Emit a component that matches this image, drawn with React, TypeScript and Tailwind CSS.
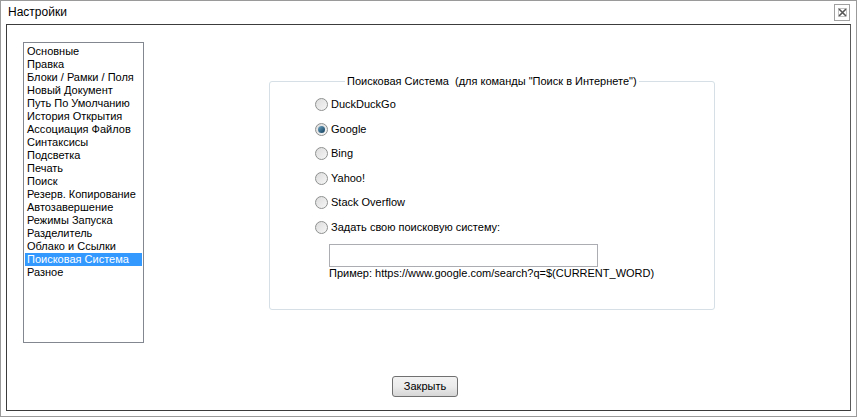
const sections = [
  "Основные",
  "Правка",
  "Блоки / Рамки / Поля",
  "Новый Документ",
  "Путь По Умолчанию",
  "История Открытия",
  "Ассоциация Файлов",
  "Синтаксисы",
  "Подсветка",
  "Печать",
  "Поиск",
  "Резерв. Копирование",
  "Автозавершение",
  "Режимы Запуска",
  "Разделитель",
  "Облако и Ссылки",
  "Поисковая Система",
  "Разное",
];

const engines = [
  "DuckDuckGo",
  "Google",
  "Bing",
  "Yahoo!",
  "Stack Overflow",
  "Задать свою поисковую систему:",
];

const Radio = ({ checked }: { checked: boolean }) => (
  <span className="flex h-[13px] w-[13px] items-center justify-center rounded-full border border-[#8e8f8f] bg-gradient-to-br from-[#dcdcdc] to-[#f6f6f6]">
    {checked && (
      <span className="h-[7px] w-[7px] rounded-full bg-gradient-to-br from-[#6fa6c4] to-[#0f3e5c]" />
    )}
  </span>
);

const App = () => {
  const selected = "Поисковая Система";

  return (
    <div className="flex h-[417px] w-[857px] flex-col border border-[#9a9a9a] bg-white font-['Liberation_Sans','Arial',sans-serif] text-[11px] leading-[13px] text-black">
      <div className="flex h-[23px] items-center justify-between pl-[7px] pr-[6px]">
        <span className="text-[12px]">Настройки</span>
        <span className="flex h-[17px] w-[16px] items-center justify-center border border-[#a0a0a0] bg-white">
          <svg width="9" height="9" viewBox="0 0 9 9">
            <path d="M1 1 L8 8 M8 1 L1 8" stroke="#555" strokeWidth="1.6" />
            <rect x="0.5" y="0.5" width="8" height="8" fill="none" stroke="#999" strokeWidth="0.6" />
          </svg>
        </span>
      </div>

      <div className="mx-[5px] mb-[5px] flex flex-1 flex-col border border-[#3c3c3c] border-r-[#5a5a5a]">
        <div className="flex">
          <div className="ml-[16px] mt-[17px] h-[301px] w-[121px] whitespace-nowrap border border-[#828790] px-[1px] pt-[2px]">
            {sections.map((s) => (
              <div
                key={s}
                className={
                  s === selected
                    ? "h-[13px] bg-[#3399ff] pl-[2px] text-white"
                    : "h-[13px] pl-[2px]"
                }
              >
                {s}
              </div>
            ))}
          </div>

          <fieldset className="ml-[125px] mt-[50px] h-[235px] w-[446px] rounded-[3px] border border-[#d5dfe5] pl-[45px]">
            <legend className="ml-[30px] whitespace-pre px-[2px]">
              Поисковая Система  (для команды "Поиск в Интернете")
            </legend>
            <div className="mt-[10px] flex flex-col gap-[11.5px]">
              {engines.map((e) => (
                <label key={e} className="flex h-[13px] items-center gap-[3px] whitespace-nowrap">
                  <Radio checked={e === "Google"} />
                  <span>{e}</span>
                </label>
              ))}
            </div>
            <div className="ml-[14px] mt-[10px] h-[23px] w-[269px] border border-[#abadb3] bg-white" />
            <div className="ml-[14px] whitespace-nowrap">
              Пример: https://www.google.com/search?q=$(CURRENT_WORD)
            </div>
          </fieldset>
        </div>

        <button className="ml-[385px] mt-[33px] h-[21px] w-[66px] rounded-[3px] border border-[#707070] bg-gradient-to-b from-[#f2f2f2] via-[#ebebeb] to-[#d6d6d6] text-[11px]">
          Закрыть
        </button>
      </div>
    </div>
  );
};

export default App;
